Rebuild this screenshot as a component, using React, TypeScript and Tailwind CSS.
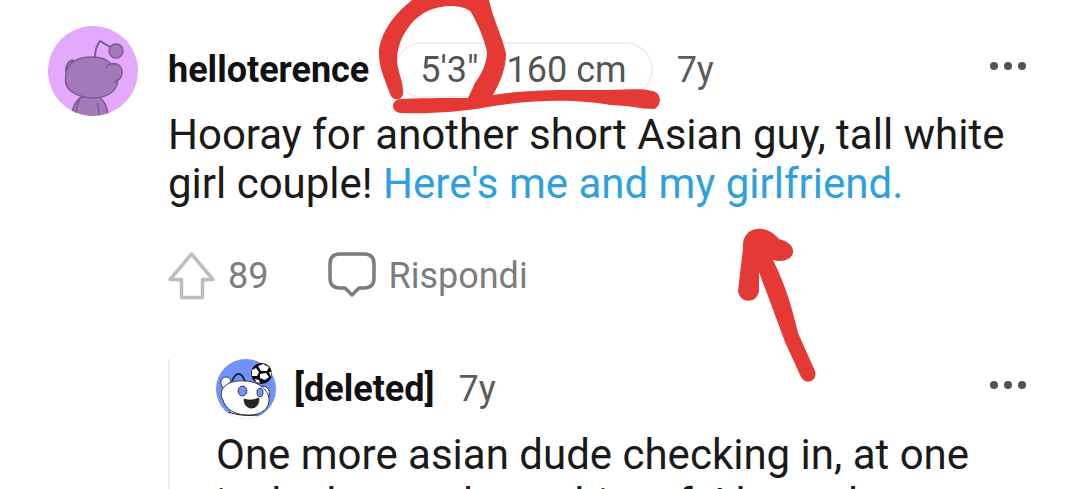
import React from 'react';

const AvatarPurple: React.FC = () => (
  <svg viewBox="0 0 90 90" className="size-[90px] shrink-0" aria-hidden="true">
    <defs>
      <clipPath id="purple-clip">
        <circle cx="45" cy="45" r="45" />
      </clipPath>
    </defs>
    <g clipPath="url(#purple-clip)">
      <rect width="90" height="90" fill="#e3a9ff" />
      <g fill="#a479b7" stroke="#7b5790" strokeWidth="1.4" strokeLinecap="round" strokeLinejoin="round">
        <path d="M23 91C24 82 28 74 33 71H51C57 75 60 83 60 91Z" />
        <path d="M32 73C29 78 28 84 28 90M49 77C51 81 51 86 51 90" fill="none" />
        <path d="M25 34C20 35 17 40 18 46L22 50Z" />
        <path d="M18 46C21 35 33 30.500 45 31C53 31 59 33 63 38C69 36 74 40 74 46C74 50 72 53 70 54C69 66 59 72 44 72C27 71 17 63 17.500 54Z" />
        <path d="M58 42C60 38 63 37 67 38M66 56C68 56 69 54 70 53" fill="none" />
        <path d="M47 31C47 25 49 19 52 15L62 21" fill="none" strokeWidth="2" />
        <circle cx="68" cy="25" r="7" />
      </g>
    </g>
  </svg>
);

const AvatarBlue: React.FC = () => (
  <svg viewBox="0 0 60 60" className="size-[60px] shrink-0" aria-hidden="true">
    <defs>
      <clipPath id="blue-clip">
        <circle cx="30" cy="30" r="30" />
      </clipPath>
    </defs>
    <g clipPath="url(#blue-clip)">
      <rect width="60" height="60" fill="#6f92fb" />
      <path d="M12 60L15 52L42 55L40 60Z" fill="#fff" />
      <g stroke="#15151c" strokeWidth="0.8" strokeLinejoin="round">
        <path d="M7 29C3 24 5 18 10 18C13 18 15 20 15 23Z" fill="#fff" />
        <path d="M44 28C50 25 55 31 53 37C52 40 50 41 49 41" fill="#fff" />
        <path d="M8 28C14 21 27 21 36 23C46 25 54 34 53 42C52 53 41 57 29 56C17 55 9 49 7 41C4 37 5 31 8 28Z" fill="#fff" />
        <ellipse cx="26.500" cy="32" rx="4.300" ry="5" fill="#6f92fb" />
        <ellipse cx="44" cy="33.500" rx="3" ry="4.300" fill="#6f92fb" />
        <path d="M28 40C33 42 38 41 43 39C43 46 40 49 35 49C31 49 28 45 28 40Z" fill="#252525" />
      </g>
      <path d="M16 22C20 13 25 12 29 22" fill="none" stroke="#15151c" strokeWidth="1.600" />
      <path d="M13 53C20 56 30 57 42 56" fill="none" stroke="#15151c" strokeWidth="1" />
    </g>
    <circle cx="45.500" cy="14.500" r="10.500" fill="#0c0c0e" />
    <g fill="#fff">
      <path d="M42 7L47 5L53 8L51 12L45 12Z" />
      <path d="M36 11L40 9L43 13L41 17L36 17Z" />
      <path d="M44 15L50 14L53 18L49 21L44 19Z" />
      <path d="M39 20L43 21L44 24L40 23Z" />
      <path d="M53 13L55.500 13L55 18Z" />
    </g>
  </svg>
);

const MoreButton: React.FC<{ label: string }> = ({ label }) => (
  <button aria-label={label} className="ml-auto mr-4 pb-2">
    <svg viewBox="0 0 38 10" className="h-[10px] w-[38px]" fill="#505254" aria-hidden="true">
      <circle cx="4" cy="5" r="4" />
      <circle cx="18" cy="5" r="4" />
      <circle cx="32" cy="5" r="4" />
    </svg>
  </button>
);

// Red pen strokes drawn over the thread
const Markup: React.FC = () => (
  <svg
    viewBox="0 0 1080 489"
    className="pointer-events-none absolute left-0 top-0 h-[489px] w-[1080px] max-w-none"
    fill="#e53935"
    aria-hidden="true"
  >
    <path d="M412 0C396 13 382 29 379 50C378 66 385 80 390 94C392 101 402 101 403 94C404 83 398 73 397 61C397 47 402 35 411 24C421 12 435 6 451 6C459 6 467 8 471 12C477 23 484 37 487 52C487 63 482 73 475 83L468 98C440 98 418 98 400 99C390 101 391 112 401 113C429 114 460 112 488 107C540 98 582 100 610 105C627 105 641 109 654 109C662 106 662 92 652 91C640 88 627 90 610 90C564 90 530 89 493 95C500 83 506 68 506 54C503 38 493 19 489 0Z" />
    <path d="M743 249C742 238 747 230 757 229C766 228 773 232 779 239C786 241 792 244 793 250C794 258 785 263 773 260C785 284 792 307 798 333L815 371C818 381 806 386 801 377L785 342L759 272L759 291C757 304 740 304 738 291L741 265Z" />
  </svg>
);

const App: React.FC = () => {
  return (
    <main className="relative h-screen overflow-hidden bg-white font-['Roboto',sans-serif] text-[#1a1a1b]">
      <article className="flex gap-[30px] pl-12 pr-9">
        <div className="pt-[26px]">
          <AvatarPurple />
        </div>
        <div className="min-w-0 flex-1">
          <header className="flex items-center pt-[42px] text-[36px] leading-[56px]">
            <h2 className="font-bold text-[#111]">helloterence</h2>
            <div className="ml-[25px] flex h-14 items-center gap-7 rounded-full border-2 border-[#efefef] px-6 text-[#555]">
              <span>5'3"</span>
              <span>160 cm</span>
            </div>
            <time className="ml-6 text-[#5c5c5c]">7y</time>
            <MoreButton label="More options" />
          </header>
          <p className="mt-3 text-[42px] leading-[49px]">
            Hooray for another short Asian guy, tall white girl couple!{' '}
            <a href="#photo" className="text-[#2f9fe0]">Here's me and my girlfriend.</a>
          </p>
          <div className="mt-11 flex h-12 items-center text-[36px] leading-[48px] text-[#7b7d7e]">
            <button className="flex items-center gap-3">
              <svg viewBox="0 0 48 48" className="size-12" fill="none" stroke="#bdbdbd" strokeWidth="3.500" strokeLinejoin="round" aria-hidden="true">
                <path d="M23.500 2L45 27.500H34.500V45.500H13.500V27.500H2Z" />
              </svg>
              <span>89</span>
            </button>
            <button className="ml-[60px] flex items-center gap-3">
              <svg viewBox="0 0 48 48" className="size-12" fill="none" stroke="#7b7d7e" strokeWidth="3.500" strokeLinejoin="round" aria-hidden="true">
                <path d="M12 2H36Q46 2 46 12V26Q46 36 36 36H31L24 43L17 36H12Q2 36 2 26V12Q2 2 12 2Z" />
              </svg>
              <span>Rispondi</span>
            </button>
          </div>
          <article className="mt-[59px] border-l-2 border-[#ededed] pl-[46px]">
            <header className="flex items-center text-[36px] leading-[56px]">
              <AvatarBlue />
              <h3 className="ml-[18px] font-bold text-[#111]">[deleted]</h3>
              <time className="ml-6 text-[#5c5c5c]">7y</time>
              <MoreButton label="More options for reply" />
            </header>
            <p className="mt-[11px] text-[42px] leading-[49px]">
              One more asian dude checking in, at one inch shorter than white gf. I have done
            </p>
          </article>
        </div>
      </article>
      <Markup />
    </main>
  );
};

export default App;
